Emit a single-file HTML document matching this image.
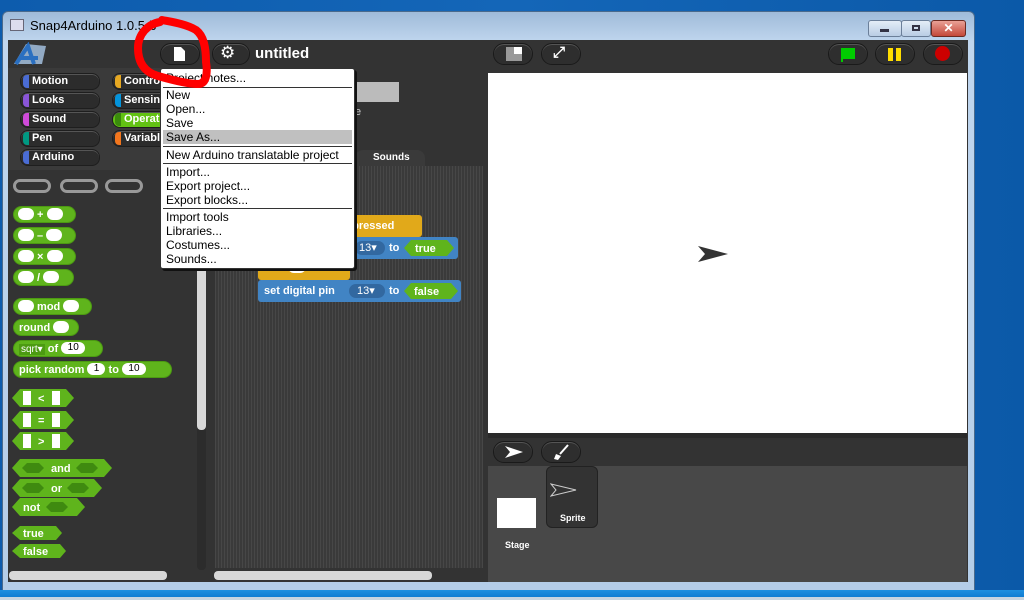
<!DOCTYPE html>
<html><head><meta charset="utf-8"><style>
*{margin:0;padding:0;box-sizing:border-box}
body{width:1024px;height:600px;overflow:hidden;background:linear-gradient(90deg,#0d5cad,#1466b8 50%,#0b59a8);font-family:"Liberation Sans",sans-serif;position:relative}
.a{position:absolute}
.win{left:2px;top:11px;width:973px;height:580px;background:linear-gradient(#9fbbd9,#c0d6ee 30px,#b4cde8);border:1px solid #4a6a8c;border-radius:6px 6px 0 0}
.cat{position:absolute;height:17px;border-radius:8px;background:#2c2c2c;border:1px solid #1e1e1e;color:#fff;font:bold 11px "Liberation Sans",sans-serif;line-height:15px;padding-left:11px;box-shadow:inset 0 1px 0 #555}
.cat i{position:absolute;left:2px;top:1px;width:6px;height:13px;border-radius:4px 0 0 4px}
.g{position:absolute;background:#5fb41c;border-radius:10px;color:#fff;font:bold 11px "Liberation Sans",sans-serif;height:17px;line-height:17px;border:1px solid #4c9a12}
.o{display:inline-block;background:#fff;border-radius:7px;width:16px;height:12px;vertical-align:middle;margin-top:-2px;color:#000;font:10px "Liberation Sans";text-align:center;line-height:12px}
.btn{position:absolute;height:22px;border-radius:11px;background:#2e2e2e;border:1px solid #1a1a1a;box-shadow:inset 0 1px 0 #555}
.mi{position:absolute;left:5px;font:12px "Liberation Sans",sans-serif;color:#000}
.sep{position:absolute;left:2px;right:2px;height:1px;background:#333}
</style></head><body>
<div class="a win"></div>
<div class="a" style="left:10px;top:19px;width:14px;height:12px;background:#dde;border:1px solid #667"></div>
<div class="a" style="left:30px;top:18px;font-size:13px;color:#000">Snap4Arduino 1.0.5-b</div>
<div class="a" style="left:868px;top:20px;width:34px;height:17px;border:1px solid #6b7f99;border-radius:3px;background:linear-gradient(#e4edf7,#b9cde4)"></div>
<div class="a" style="left:880px;top:29px;width:9px;height:3px;background:#334"></div>
<div class="a" style="left:901px;top:20px;width:30px;height:17px;border:1px solid #6b7f99;border-radius:3px;background:linear-gradient(#e4edf7,#b9cde4)"></div>
<div class="a" style="left:912px;top:25px;width:8px;height:6px;border:2px solid #334"></div>
<div class="a" style="left:931px;top:20px;width:35px;height:17px;border:1px solid #6b2a22;border-radius:3px;background:linear-gradient(#e9a196,#c4483a);color:#fff;font:bold 12px sans-serif;text-align:center;line-height:15px">✕</div>

<div class="a" style="left:8px;top:40px;width:960px;height:542px;background:#333"></div>
<svg class="a" style="left:12px;top:42px" width="36" height="24"><polygon points="2,22 14,2 34,4 30,22" fill="#aac8e8" opacity=".8"/><path d="M4 22 L16 4 L22 22 M8 16 L26 16" stroke="#2a6fc0" stroke-width="4" fill="none"/></svg>
<div class="btn" style="left:160px;top:43px;width:40px"></div>
<svg class="a" style="left:173px;top:46px" width="14" height="16"><path d="M1 1H8L12 5V15H1Z" fill="#fff"/></svg>
<div class="btn" style="left:212px;top:43px;width:38px"></div>
<div class="a" style="left:220px;top:43px;color:#fff;font-size:17px">⚙</div>
<div class="a" style="left:255px;top:45px;color:#fff;font:bold 15px 'Liberation Sans'">untitled</div>
<div class="btn" style="left:493px;top:43px;width:40px"></div>
<div class="a" style="left:506px;top:47px;width:16px;height:14px;background:#999"></div>
<div class="a" style="left:514px;top:47px;width:8px;height:7px;background:#fff"></div>
<div class="btn" style="left:541px;top:43px;width:40px"></div>
<div class="a" style="left:553px;top:44px;color:#fff;font:bold 15px sans-serif">⤢</div>
<div class="btn" style="left:828px;top:43px;width:40px"></div>
<svg class="a" style="left:840px;top:47px" width="16" height="16"><path d="M2 1V15M2 2H14V11H2" fill="#0c0" stroke="#0c0" stroke-width="2"/></svg>
<div class="btn" style="left:875px;top:43px;width:40px"></div>
<div class="a" style="left:888px;top:48px;width:5px;height:13px;background:#fd0"></div>
<div class="a" style="left:896px;top:48px;width:5px;height:13px;background:#fd0"></div>
<div class="btn" style="left:923px;top:43px;width:40px"></div>
<div class="a" style="left:935px;top:46px;width:15px;height:15px;border-radius:50%;background:#c00"></div>

<div class="a" style="left:8px;top:68px;width:200px;height:102px;background:#3a3a3a"></div>
<div class="cat" style="left:20px;top:73px;width:80px"><i style="background:#4a6cd4"></i>Motion</div>
<div class="cat" style="left:20px;top:92px;width:80px"><i style="background:#8a55d7"></i>Looks</div>
<div class="cat" style="left:20px;top:111px;width:80px"><i style="background:#cf4ad9"></i>Sound</div>
<div class="cat" style="left:20px;top:130px;width:80px"><i style="background:#009982"></i>Pen</div>
<div class="cat" style="left:20px;top:149px;width:80px"><i style="background:#4a6cd4"></i>Arduino</div>
<div class="cat" style="left:112px;top:73px;width:60px"><i style="background:#e6a822"></i>Contro</div>
<div class="cat" style="left:112px;top:92px;width:60px"><i style="background:#0494dc"></i>Sensin</div>
<div class="cat" style="left:112px;top:111px;width:60px;background:#62c213"><i style="background:#3a8a0c"></i>Operat</div>
<div class="cat" style="left:112px;top:130px;width:60px"><i style="background:#f3761d"></i>Variabl</div>

<div class="a" style="left:13px;top:179px;width:38px;height:14px;border:3px solid #999;border-radius:7px"></div>
<div class="a" style="left:60px;top:179px;width:38px;height:14px;border:3px solid #999;border-radius:7px"></div>
<div class="a" style="left:105px;top:179px;width:38px;height:14px;border:3px solid #999;border-radius:7px"></div>
<div class="g" style="left:13px;top:206px;width:63px;padding-left:4px"><span class="o"></span> + <span class="o"></span></div>
<div class="g" style="left:13px;top:227px;width:63px;padding-left:4px"><span class="o"></span> – <span class="o"></span></div>
<div class="g" style="left:13px;top:248px;width:63px;padding-left:4px"><span class="o"></span> × <span class="o"></span></div>
<div class="g" style="left:13px;top:269px;width:61px;padding-left:4px"><span class="o"></span> / <span class="o"></span></div>
<div class="g" style="left:13px;top:298px;width:79px;padding-left:4px"><span class="o"></span> mod <span class="o"></span></div>
<div class="g" style="left:13px;top:319px;width:66px;padding-left:5px">round <span class="o"></span></div>
<div class="g" style="left:13px;top:340px;width:90px;padding-left:5px"><span style="font-weight:normal;font-size:10px;background:#4c9a12;padding:0 2px">sqrt▾</span> of <span class="o" style="width:24px">10</span></div>
<div class="g" style="left:13px;top:361px;width:159px;padding-left:5px">pick random <span class="o" style="width:18px">1</span> to <span class="o" style="width:24px">10</span></div>
<svg class="a" style="left:12px;top:388px" width="200" height="180" font-family="Liberation Sans" font-weight="bold" font-size="11" fill="#fff">
<g fill="#5fb41c"><polygon points="0,10 8,1 54,1 62,10 54,19 8,19"/><polygon points="0,32 8,23 54,23 62,32 54,41 8,41"/><polygon points="0,53 8,44 54,44 62,53 54,62 8,62"/>
<polygon points="0,80 8,71 92,71 100,80 92,89 8,89"/><polygon points="0,100 8,91 82,91 90,100 82,109 8,109"/><polygon points="0,119 8,110 65,110 73,119 65,128 8,128"/>
<polygon points="0,145 8,138 44,138 50,145 44,152 8,152"/><polygon points="0,163 8,156 48,156 54,163 48,170 8,170"/></g>
<rect x="11" y="3" width="8" height="14" fill="#fff"/><rect x="40" y="3" width="8" height="14"/><text x="26" y="14">&lt;</text>
<rect x="11" y="25" width="8" height="14"/><rect x="40" y="25" width="8" height="14"/><text x="26" y="36">=</text>
<rect x="11" y="46" width="8" height="14"/><rect x="40" y="46" width="8" height="14"/><text x="26" y="57">&gt;</text>
<g fill="#3f8a10"><polygon points="10,80 15,75 27,75 32,80 27,85 15,85"/><polygon points="64,80 69,75 81,75 86,80 81,85 69,85"/><polygon points="10,100 15,95 27,95 32,100 27,105 15,105"/><polygon points="55,100 60,95 72,95 77,100 72,105 60,105"/><polygon points="34,119 39,114 51,114 56,119 51,124 39,124"/></g>
<text x="39" y="84">and</text><text x="39" y="104">or</text><text x="11" y="123">not</text><text x="11" y="149">true</text><text x="11" y="167">false</text>
</svg>
<div class="a" style="left:197px;top:175px;width:9px;height:395px;background:#2c2c2c;border-radius:4px"></div>
<div class="a" style="left:197px;top:175px;width:9px;height:255px;background:#d8d8d8;border-radius:4px"></div>
<div class="a" style="left:9px;top:571px;width:158px;height:9px;background:#d8d8d8;border-radius:4px"></div>

<div class="a" style="left:212px;top:68px;width:272px;height:514px;background:#333"></div>
<div class="a" style="left:355px;top:82px;width:44px;height:20px;background:#bbb"></div>
<div class="a" style="left:355px;top:106px;color:#ccc;font-size:11px">e</div>
<div class="a" style="left:355px;top:150px;width:70px;height:16px;background:#3a3a3a;border-radius:8px 8px 0 0;color:#fff;font:bold 10px 'Liberation Sans';padding:2px 0 0 18px">Sounds</div>
<div class="a" style="left:215px;top:166px;width:268px;height:402px;background:repeating-linear-gradient(90deg,#474747 0 1px,#3a3a3a 1px 3px)"></div>
<div class="a" style="left:258px;top:215px;width:164px;height:22px;background:#e1a91a;border-radius:3px;color:#fff;font:bold 11px 'Liberation Sans';padding:5px 0 0 85px">y pressed</div>
<div class="a" style="left:258px;top:258px;width:92px;height:22px;background:#e1a91a;border-radius:3px;color:#fff;font:bold 11px 'Liberation Sans';padding:4px 0 0 6px">wait <span class="o" style="width:18px"></span> secs</div>
<div class="a" style="left:258px;top:237px;width:200px;height:22px;background:#4184c4;border-radius:3px"></div>
<div class="a" style="left:355px;top:241px;width:30px;height:14px;background:#3268a0;border-radius:7px;color:#fff;font:11px 'Liberation Sans';padding-left:4px">13▾</div>
<div class="a" style="left:389px;top:242px;color:#fff;font:bold 11px 'Liberation Sans'">to</div>
<svg class="a" style="left:404px;top:240px" width="50" height="16"><polygon points="0,8 7,0 43,0 50,8 43,16 7,16" fill="#5fb41c"/><text x="11" y="12" fill="#fff" font-family="Liberation Sans" font-weight="bold" font-size="11">true</text></svg>
<div class="a" style="left:258px;top:280px;width:203px;height:22px;background:#4184c4;border-radius:3px;color:#fff;font:bold 11px 'Liberation Sans';padding:5px 0 0 6px">set digital pin</div>
<div class="a" style="left:349px;top:284px;width:36px;height:14px;background:#3268a0;border-radius:7px;color:#fff;font:11px 'Liberation Sans';padding-left:8px">13▾</div>
<div class="a" style="left:389px;top:285px;color:#fff;font:bold 11px 'Liberation Sans'">to</div>
<svg class="a" style="left:404px;top:283px" width="54" height="16"><polygon points="0,8 7,0 47,0 54,8 47,16 7,16" fill="#5fb41c"/><text x="10" y="12" fill="#fff" font-family="Liberation Sans" font-weight="bold" font-size="11">false</text></svg>
<div class="a" style="left:214px;top:571px;width:218px;height:9px;background:#d8d8d8;border-radius:4px"></div>

<div class="a" style="left:488px;top:73px;width:479px;height:360px;background:#fff"></div>
<svg class="a" style="left:697px;top:245px" width="32" height="18"><polygon points="1,1 31,9 1,17 8,9" fill="#333"/></svg>
<div class="a" style="left:488px;top:433px;width:479px;height:5px;background:#2a2a2a"></div>
<div class="a" style="left:488px;top:438px;width:479px;height:28px;background:#333"></div>
<div class="btn" style="left:493px;top:441px;width:40px"></div>
<svg class="a" style="left:504px;top:445px" width="20" height="14"><polygon points="1,1 19,7 1,13 6,7" fill="#fff"/></svg>
<div class="btn" style="left:541px;top:441px;width:40px"></div>
<svg class="a" style="left:552px;top:443px" width="18" height="18"><path d="M16 2 L8 11" stroke="#fff" stroke-width="2"/><path d="M4 11 L9 13 L6 17 L2 16Z" fill="#fff"/></svg>
<div class="a" style="left:488px;top:466px;width:479px;height:116px;background:#484848"></div>
<div class="a" style="left:497px;top:498px;width:39px;height:30px;background:#fff"></div>
<div class="a" style="left:505px;top:540px;color:#fff;font:bold 9px 'Liberation Sans'">Stage</div>
<div class="a" style="left:546px;top:466px;width:52px;height:62px;background:#333;border:1px solid #222;border-radius:6px"></div>
<svg class="a" style="left:550px;top:482px" width="28" height="16"><polygon points="1,2 26,8 1,14 6,8" fill="none" stroke="#ccc"/></svg>
<div class="a" style="left:560px;top:513px;color:#fff;font:bold 9px 'Liberation Sans'">Sprite</div>

<div class="a" style="left:160px;top:68px;width:195px;height:201px;background:#fff;border:1px solid #333;border-radius:3px;box-shadow:2px 2px 0 #111">
<div class="a" style="left:2px;top:61px;width:189px;height:14px;background:#c0c0c0"></div>
<div class="mi" style="top:2px">Project notes...</div>
<div class="sep" style="top:18px"></div>
<div class="mi" style="top:19px">New</div>
<div class="mi" style="top:33px">Open...</div>
<div class="mi" style="top:47px">Save</div>
<div class="mi" style="top:61px">Save As...</div>
<div class="sep" style="top:77px"></div>
<div class="mi" style="top:79px">New Arduino translatable project</div>
<div class="sep" style="top:94px"></div>
<div class="mi" style="top:96px">Import...</div>
<div class="mi" style="top:110px">Export project...</div>
<div class="mi" style="top:124px">Export blocks...</div>
<div class="sep" style="top:139px"></div>
<div class="mi" style="top:141px">Import tools</div>
<div class="mi" style="top:155px">Libraries...</div>
<div class="mi" style="top:169px">Costumes...</div>
<div class="mi" style="top:183px">Sounds...</div>
</div>

<svg class="a" style="left:128px;top:12px" width="92" height="82"><path d="M32 10 C20 12 10 22 10 36 C10 50 16 60 30 64 C44 68 60 72 70 72 C78 72 80 62 78 50 C78 36 76 24 68 18 C58 12 44 10 34 8" fill="none" stroke="#f00" stroke-width="8" stroke-linecap="round"/></svg>

<div class="a" style="left:0;top:590px;width:1024px;height:10px;background:linear-gradient(#1e8fe0,#0a74cc)"></div>
<div class="a" style="left:0;top:597px;width:1024px;height:3px;background:#c8d4e0"></div>
</body></html>
